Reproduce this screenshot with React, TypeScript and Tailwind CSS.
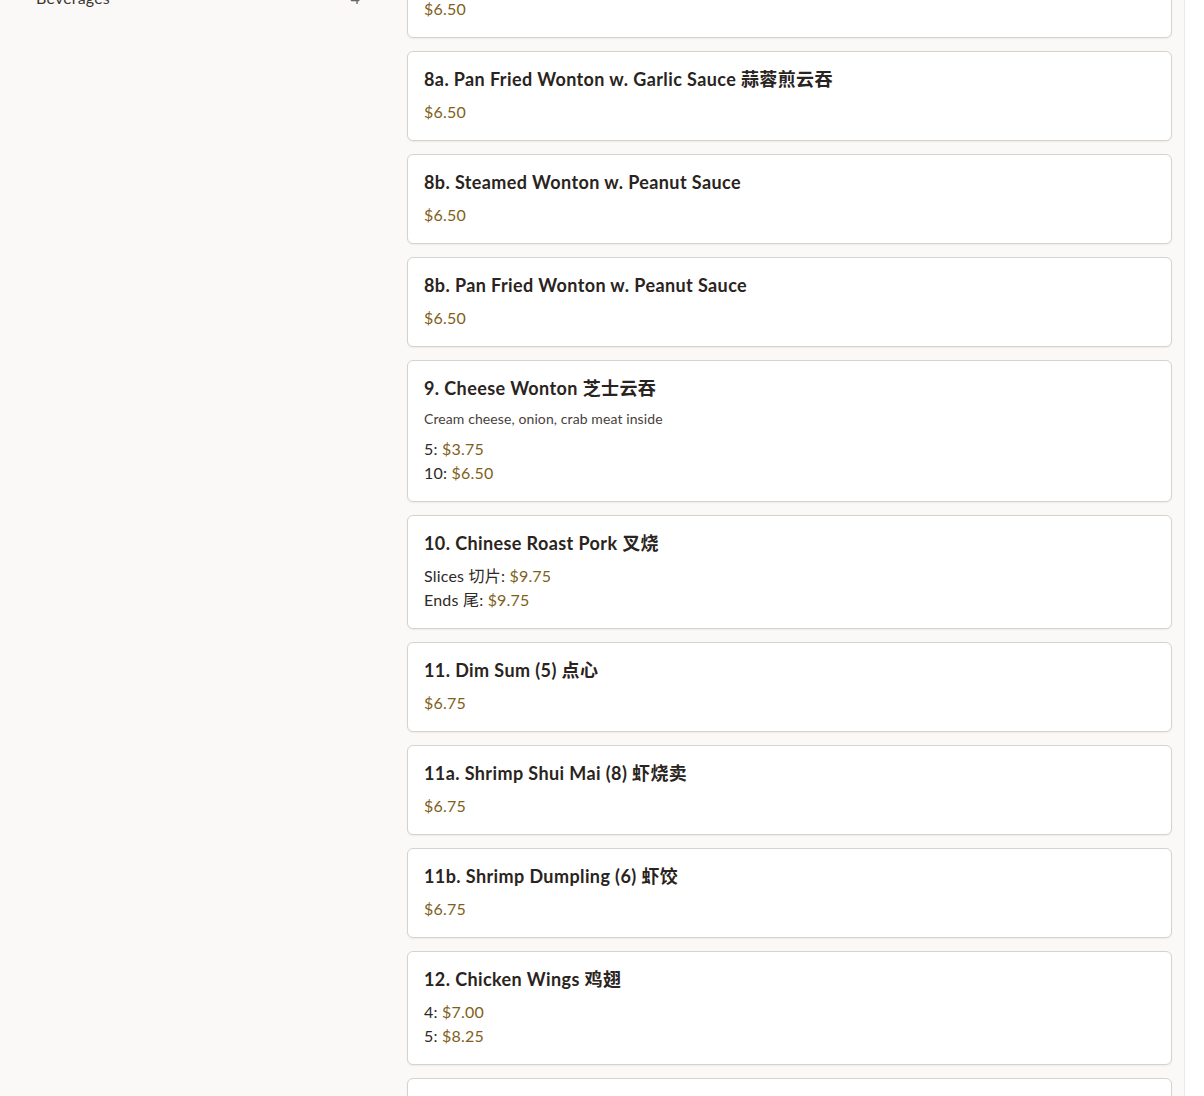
import React from 'react';

type PriceLine = { label: string; price: string };

interface MenuItem {
  title: string;
  description?: string;
  price?: string;
  lines?: PriceLine[];
}

const items: MenuItem[] = [
  { title: '8. Steamed Wonton w. Garlic Sauce 蒜蓉云吞', price: '$6.50' },
  { title: '8a. Pan Fried Wonton w. Garlic Sauce 蒜蓉煎云吞', price: '$6.50' },
  { title: '8b. Steamed Wonton w. Peanut Sauce', price: '$6.50' },
  { title: '8b. Pan Fried Wonton w. Peanut Sauce', price: '$6.50' },
  {
    title: '9. Cheese Wonton 芝士云吞',
    description: 'Cream cheese, onion, crab meat inside',
    lines: [
      { label: '5', price: '$3.75' },
      { label: '10', price: '$6.50' },
    ],
  },
  {
    title: '10. Chinese Roast Pork 叉烧',
    lines: [
      { label: 'Slices 切片', price: '$9.75' },
      { label: 'Ends 尾', price: '$9.75' },
    ],
  },
  { title: '11. Dim Sum (5) 点心', price: '$6.75' },
  { title: '11a. Shrimp Shui Mai (8) 虾烧卖', price: '$6.75' },
  { title: '11b. Shrimp Dumpling (6) 虾饺', price: '$6.75' },
  {
    title: '12. Chicken Wings 鸡翅',
    lines: [
      { label: '4', price: '$7.00' },
      { label: '5', price: '$8.25' },
    ],
  },
  { title: '13. Egg Roll 春卷', price: '$2.50' },
];

const MenuCard = ({ item }: { item: MenuItem }) => (
  <div className="rounded-md border border-[#d6d2ce] bg-white p-4 shadow-[0_1px_2px_rgba(0,0,0,0.06)]">
    <h3 className="text-[18px] font-bold leading-[22px] tracking-[0.4px] text-[#2a2421]">{item.title}</h3>
    {item.description && (
      <p className="mt-[10px] text-[14px] leading-5 tracking-[0.1px] text-[#48413d]">{item.description}</p>
    )}
    {item.price && (
      <div className="mt-[10px] text-[16px] leading-6 tracking-[0.2px] text-[#7f5f20]">{item.price}</div>
    )}
    {item.lines && (
      <div className={item.description ? 'mt-2 flex flex-col' : 'mt-[10px] flex flex-col'}>
        {item.lines.map((l) => (
          <div key={l.label} className="text-[16px] leading-6 tracking-[0.2px] text-[#2f2a27]">
            {l.label}: <span className="text-[#7f5f20]">{l.price}</span>
          </div>
        ))}
      </div>
    )}
  </div>
);

export default function App() {
  return (
    <div className="flex h-[1096px] overflow-hidden bg-[#faf9f7] font-['Lato','Noto_Sans_CJK_SC',sans-serif]">
      <div className="-mt-[52px] flex flex-1 gap-[35px] pl-6 pr-3">
        {/* Category sidebar (scrolled past) */}
        <aside className="w-[348px] shrink-0 pt-[38px]">
          <div className="flex items-center justify-between px-3 text-[16px] leading-6 tracking-[0.2px] text-[#3d3733]">
            <span>Beverages</span>
            <span className="text-[#6b6460]">4</span>
          </div>
        </aside>

        {/* Item list */}
        <main className="flex flex-1 flex-col gap-[13px]">
          {items.map((item) => (
            <MenuCard key={item.title} item={item} />
          ))}
        </main>
      </div>
      <div className="w-5 shrink-0 border-l border-[#ebe9e6] bg-white" />
    </div>
  );
}
